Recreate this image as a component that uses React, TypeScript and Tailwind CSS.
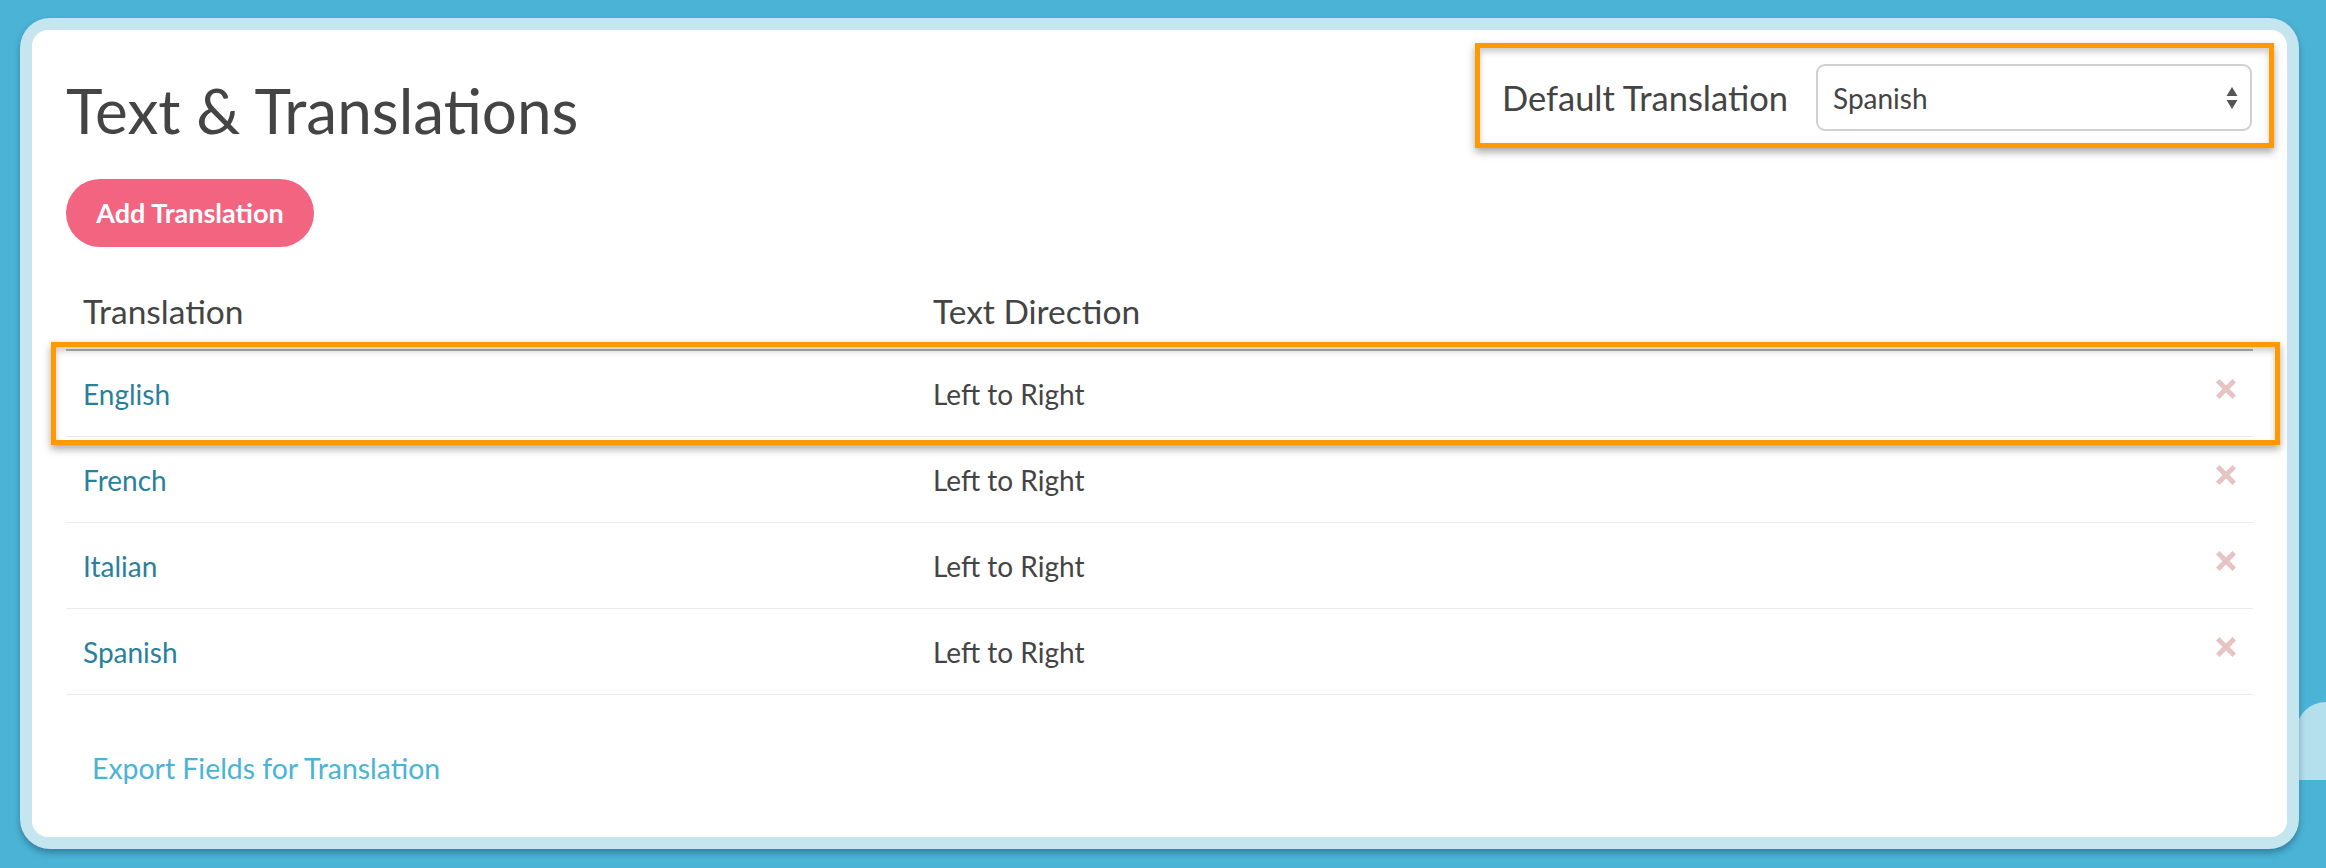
type Row = {
  name: string;
  direction: string;
};

const rows: Row[] = [
  { name: "English", direction: "Left to Right" },
  { name: "French", direction: "Left to Right" },
  { name: "Italian", direction: "Left to Right" },
  { name: "Spanish", direction: "Left to Right" },
];

function RemoveIcon() {
  return (
    <svg width="20" height="20" viewBox="0 0 20 20" className="block">
      <path
        d="M3.5 3.5 L16.5 16.5 M16.5 3.5 L3.5 16.5"
        stroke="#e6c4c4"
        strokeWidth="5"
        strokeLinecap="square"
      />
    </svg>
  );
}

function SelectArrows() {
  return (
    <svg width="12" height="24" viewBox="0 0 12 24" className="block">
      <path d="M6 1 L11.5 10 L0.5 10 Z" fill="#555" />
      <path d="M6 23 L11.5 14 L0.5 14 Z" fill="#555" />
    </svg>
  );
}

export default function App() {
  return (
    <div className="relative h-[868px] w-[2326px] overflow-hidden bg-[#4bb3d5] pl-[20px] pt-[18px] font-['Lato','Open_Sans',sans-serif]">
      <div className="absolute right-0 top-[702px] h-[78px] w-[30px] rounded-tl-[40px] bg-[#b4dfec]" />
      <div className="relative h-[831px] w-[2279px] rounded-[30px] bg-[#c5e6ef] p-[12px] shadow-[0_4px_6px_rgba(0,40,70,0.35)]">
        <div className="relative h-full rounded-[16px] bg-white px-[34px]">
          <div className="flex items-start justify-between">
            <h1 className="mt-[44px] text-[62px] leading-[72px] font-normal text-[#444]">
              Text &amp; Translations
            </h1>
            <div className="mt-[34px] flex items-center gap-[28px] pr-px">
              <span className="text-[34.5px] text-[#444]">Default Translation</span>
              <div className="flex h-[67px] w-[436px] items-center justify-between rounded-[9px] border-2 border-[#d0d0d0] bg-white pl-[15px] pr-[12px]">
                <span className="text-[28px] text-[#444]">Spanish</span>
                <SelectArrows />
              </div>
            </div>
          </div>

          <button className="mt-[33px] h-[68px] w-[248px] rounded-full bg-[#f2647f] text-[27px] font-bold text-white">
            Add Translation
          </button>

          <div className="mt-[47px]">
            <div className="grid h-[57px] grid-cols-[850px_1fr_80px] border-b-2 border-[#b0b0b0]">
              <div className="px-[17px] text-[33.5px] leading-[34px] text-[#444]">Translation</div>
              <div className="px-[17px] text-[33.5px] leading-[34px] text-[#444]">Text Direction</div>
              <div />
            </div>
            {rows.map((row) => (
              <div
                key={row.name}
                className="grid h-[86px] grid-cols-[850px_1fr_80px] items-center border-b border-[#ebebeb]"
              >
                <div className="px-[17px] text-[28px] text-[#2b7f9c]">{row.name}</div>
                <div className="px-[17px] text-[28px] text-[#444]">{row.direction}</div>
                <div className="flex justify-end pb-[10px] pr-[17px]">
                  <RemoveIcon />
                </div>
              </div>
            ))}
          </div>

          <div className="mt-[52px] pl-[26px] text-[28.4px] text-[#4ab4d6]">
            Export Fields for Translation
          </div>

          <div className="pointer-events-none absolute left-[1443px] top-[13px] h-[105px] w-[799px] border-[5px] border-[#ff9900] shadow-[0_4px_8px_rgba(0,0,0,0.35),inset_0_4px_6px_rgba(0,0,0,0.2)]" />
          <div className="pointer-events-none absolute left-[19px] top-[312px] h-[103px] w-[2229px] border-[5px] border-[#ff9900] shadow-[0_4px_8px_rgba(0,0,0,0.35),inset_0_4px_6px_rgba(0,0,0,0.2)]" />
        </div>
      </div>
    </div>
  );
}
